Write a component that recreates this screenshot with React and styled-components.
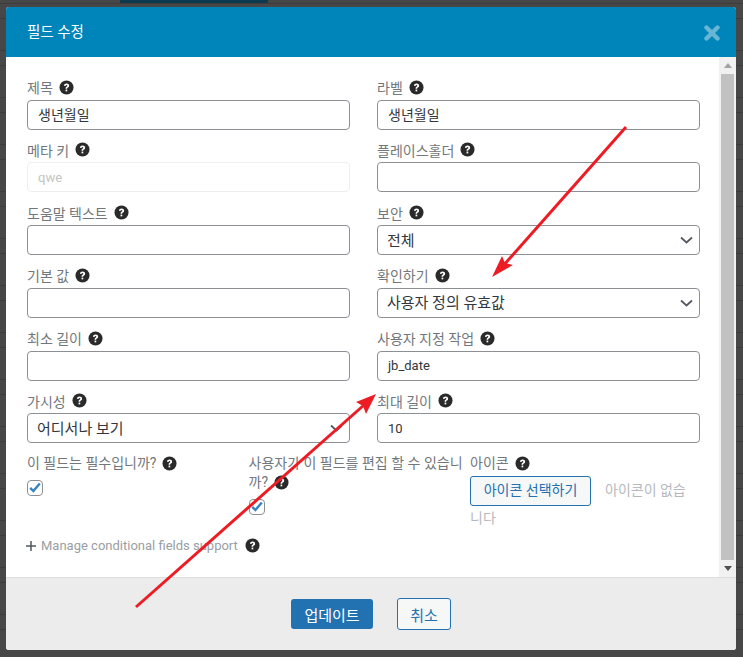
import React from "react";
import styled, { createGlobalStyle } from "styled-components";

const Global = createGlobalStyle`
  html, body { margin: 0; padding: 0; height: 100%; overflow: hidden; }
  * { box-sizing: border-box; }
  body { font-family: Roboto, "Noto Sans CJK KR", sans-serif; background: #444; }
`;
const Backdrop = styled.div`
  position: relative; width: 743px; height: 657px; padding: 7px 7px 7px 6px;
  background-color: #474747;
  background-image:
    linear-gradient(#3c3c3c 1px, transparent 1px),
    linear-gradient(#3c3c3c 1px, transparent 1px);
  background-size: 100% 47px, 100% 47px;
  background-position: 0 18px, 0 3px;
  overflow: hidden;
`;
const TopStrip = styled.div`
  position: absolute; left: 120px; top: 0; width: 148px; height: 3px; background: #0d3a4e;
`;
const Modal = styled.div`
  width: 730px; height: 643px; display: flex; flex-direction: column; border-radius: 3px; overflow: hidden; background: #fff;
`;
const Header = styled.header`
  height: 50px; flex: none; background: #0085ba; color: #fff; display: flex; align-items: center; justify-content: space-between;
  padding: 0 16px 4px 21px; font-size: 14.5px;
`;
const CloseIcon = styled.svg`
  width: 16px; height: 16px; margin-top: 6px;
`;
const Body = styled.div`
  height: 520px; flex: none; display: flex;
`;
const Form = styled.div`
  flex: 1; padding: 19.6px 19px 0 21px;
`;
const Grid = styled.div`
  display: grid; grid-template-columns: 323px 323px; column-gap: 27px; row-gap: 9.75px;
`;
const Field = styled.div`
  display: flex; flex-direction: column; height: 53px;
`;
const Label = styled.div`
  display: flex; align-items: center; gap: 6px; height: 20px; padding-top: 1px; margin-bottom: 3px; color: #72777c; font-size: 14px; white-space: nowrap;
`;
const HelpCircle = styled.svg`
  width: 15px; height: 15px; flex: none;
`;
const Input = styled.div`
  height: 30px; border: 1px solid ${p => (p.$disabled ? "#eeeeee" : "#8c8f94")}; border-radius: 4px;
  padding: 0 ${p => (p.$select ? "6px" : "10px")} ${p => (p.$latin ? "0" : "2px")} ${p => (p.$select ? "9px" : "10px")};
  display: flex; align-items: center; justify-content: space-between;
  font-size: ${p => (p.$select ? "15px" : p.$latin ? "13px" : "14px")};
  color: ${p => (p.$disabled ? "#c4c4c4" : "#32373c")};
  background: #fff;
`;
const ChevronIcon = styled.svg`
  width: 13px; height: 8px; margin-top: 2px; flex: none;
`;
const ThreeCols = styled.div`
  display: grid; grid-template-columns: 221.5px 221.5px 230px; margin-top: 10.6px;
`;
const Cell = styled.div`
  display: flex; flex-direction: column;
`;
const WrapLabel = styled.div`
  color: #72777c; font-size: 14px; line-height: 19px; width: 218px; word-break: break-all;
`;
const InlineHelp = styled(HelpCircle)`
  vertical-align: -3px; margin-left: 6px;
`;
const Check = styled.div`
  width: 16px; height: 16px; margin-top: 7px; border: 1px solid #8c8f94; border-radius: 4px; background: #fff;
  display: flex; align-items: center; justify-content: center;
`;
const IconRow = styled.div`
  width: 224px; color: #b4b9be; font-size: 14px; line-height: 25px; margin-top: 3px;
`;
const SelectIcon = styled.span`
  display: inline-flex; align-items: center; justify-content: center; height: 30px; width: 121px; border: 1px solid #2271b1; border-radius: 3px;
  background: #f6f7f7; color: #2271b1; margin-right: 14px; font-size: 14px; vertical-align: middle;
`;
const Conditional = styled.div`
  display: flex; align-items: center; margin-top: 5px; font-size: 13px; color: #9a9ea3; height: 20px; white-space: nowrap;
`;
const Plus = styled.svg`
  width: 10px; height: 10px; margin-right: 5px; flex: none; margin-left: -1px;
`;
const CondHelp = styled(HelpCircle)`
  margin-left: 7px;
`;
const Scrollbar = styled.div`
  width: 17px; flex: none; background: #f1f1f1; display: flex; flex-direction: column; align-items: center; justify-content: space-between;
`;
const ScrollArrow = styled.div`
  width: 17px; height: 17px; display: flex; align-items: center; justify-content: center;
`;
const Thumb = styled.div`
  flex: 1; width: 13px; background: #c1c1c1;
`;
const Footer = styled.footer`
  flex: 1; background: #ececec; border-top: 1px solid #dddddd; display: flex; justify-content: center; align-items: center; gap: 24px;
`;
const Primary = styled.button`
  width: 82px; height: 30px; border: none; border-radius: 3px; background: #2271b1; color: #fff; font: inherit; font-size: 15px;
`;
const Secondary = styled.button`
  width: 54px; height: 32px; border: 1px solid #2271b1; border-radius: 3px; background: #f6f7f7; color: #2271b1; font: inherit; font-size: 15px;
`;
const Arrows = styled.svg`
  position: absolute; left: 0; top: 0; width: 743px; height: 657px; pointer-events: none;
`;

const Help = ({ as: C = HelpCircle }) => (
  <C viewBox="0 0 16 16">
    <circle cx="8" cy="8" r="7.5" fill="#2a2a2a" />
    <path d="M5.300 6.200C5.400 4.600 6.600 3.800 8.100 3.800c1.600 0 2.700.9 2.700 2.200 0 1.100-.6 1.600-1.300 2.100-.6.4-.8.7-.8 1.300H7c0-1.100.3-1.600 1-2.100.6-.4.9-.7.9-1.200 0-.5-.4-.8-.9-.8-.6 0-1 .4-1 1z" fill="#fff" />
    <rect x="7" y="10.200" width="1.800" height="1.900" fill="#fff" />
  </C>
);
const Chevron = () => (
  <ChevronIcon viewBox="0 0 13 8"><path d="M1 1.500l5.500 5 5.500-5" fill="none" stroke="#50575e" strokeWidth="1.700" /></ChevronIcon>
);
const Tick = () => (
  <svg width="12" height="11" viewBox="0 0 12 11"><path d="M1.200 5.800l3.200 3.200L10.800 1.500" fill="none" stroke="#3582c4" strokeWidth="2.400" /></svg>
);

const F = ({ label, value, select, disabled, latin }) => (
  <Field>
    <Label>{label} <Help /></Label>
    <Input $disabled={disabled} $select={select} $latin={latin}>{value}{select && <Chevron />}</Input>
  </Field>
);

export default function App() {
  return (
    <>
      <Global />
      <Backdrop>
        <TopStrip />
        <Modal>
          <Header>
            <span>필드 수정</span>
            <CloseIcon viewBox="0 0 16 16"><path d="M2.500 2.500l11 11M13.500 2.500l-11 11" stroke="#66b6d6" strokeWidth="4.400" strokeLinecap="round" /></CloseIcon>
          </Header>
          <Body>
            <Form>
              <Grid>
                <F label="제목" value="생년월일" />
                <F label="라벨" value="생년월일" />
                <F label="메타 키" value="qwe" disabled latin />
                <F label="플레이스홀더" />
                <F label="도움말 텍스트" />
                <F label="보안" value="전체" select />
                <F label="기본 값" />
                <F label="확인하기" value="사용자 정의 유효값" select />
                <F label="최소 길이" />
                <F label="사용자 지정 작업" value="jb_date" latin />
                <F label="가시성" value="어디서나 보기" select />
                <F label="최대 길이" value="10" latin />
              </Grid>
              <ThreeCols>
                <Cell>
                  <WrapLabel>이 필드는 필수입니까?<Help as={InlineHelp} /></WrapLabel>
                  <Check><Tick /></Check>
                </Cell>
                <Cell>
                  <WrapLabel>사용자가 이 필드를 편집 할 수 있습니까?<Help as={InlineHelp} /></WrapLabel>
                  <Check><Tick /></Check>
                </Cell>
                <Cell>
                  <WrapLabel>아이콘<Help as={InlineHelp} /></WrapLabel>
                  <IconRow><SelectIcon>아이콘 선택하기</SelectIcon>아이콘이 없습<br />니다</IconRow>
                </Cell>
              </ThreeCols>
              <Conditional>
                <Plus viewBox="0 0 10 10"><path d="M5 0v10M0 5h10" stroke="#50575e" strokeWidth="1.500" /></Plus>
                Manage conditional fields support
                <Help as={CondHelp} />
              </Conditional>
            </Form>
            <Scrollbar>
              <ScrollArrow><svg width="8" height="5" viewBox="0 0 8 5"><path d="M4 0l4 5H0z" fill="#a3a3a3" /></svg></ScrollArrow>
              <Thumb />
              <ScrollArrow><svg width="8" height="5" viewBox="0 0 8 5"><path d="M0 0h8L4 5z" fill="#505050" /></svg></ScrollArrow>
            </Scrollbar>
          </Body>
          <Footer>
            <Primary>업데이트</Primary>
            <Secondary>취소</Secondary>
          </Footer>
        </Modal>
        <Arrows viewBox="0 0 743 657">
          <path d="M626 127L503 266" stroke="#ed1c24" strokeWidth="3" fill="none" />
          <path d="M492 277L502 256L505 263L513 265Z" fill="#ed1c24" />
          <path d="M136 607L364 405" stroke="#ed1c24" strokeWidth="3" fill="none" />
          <path d="M376 394L356 402L363 406L366 414Z" fill="#ed1c24" />
        </Arrows>
      </Backdrop>
    </>
  );
}
